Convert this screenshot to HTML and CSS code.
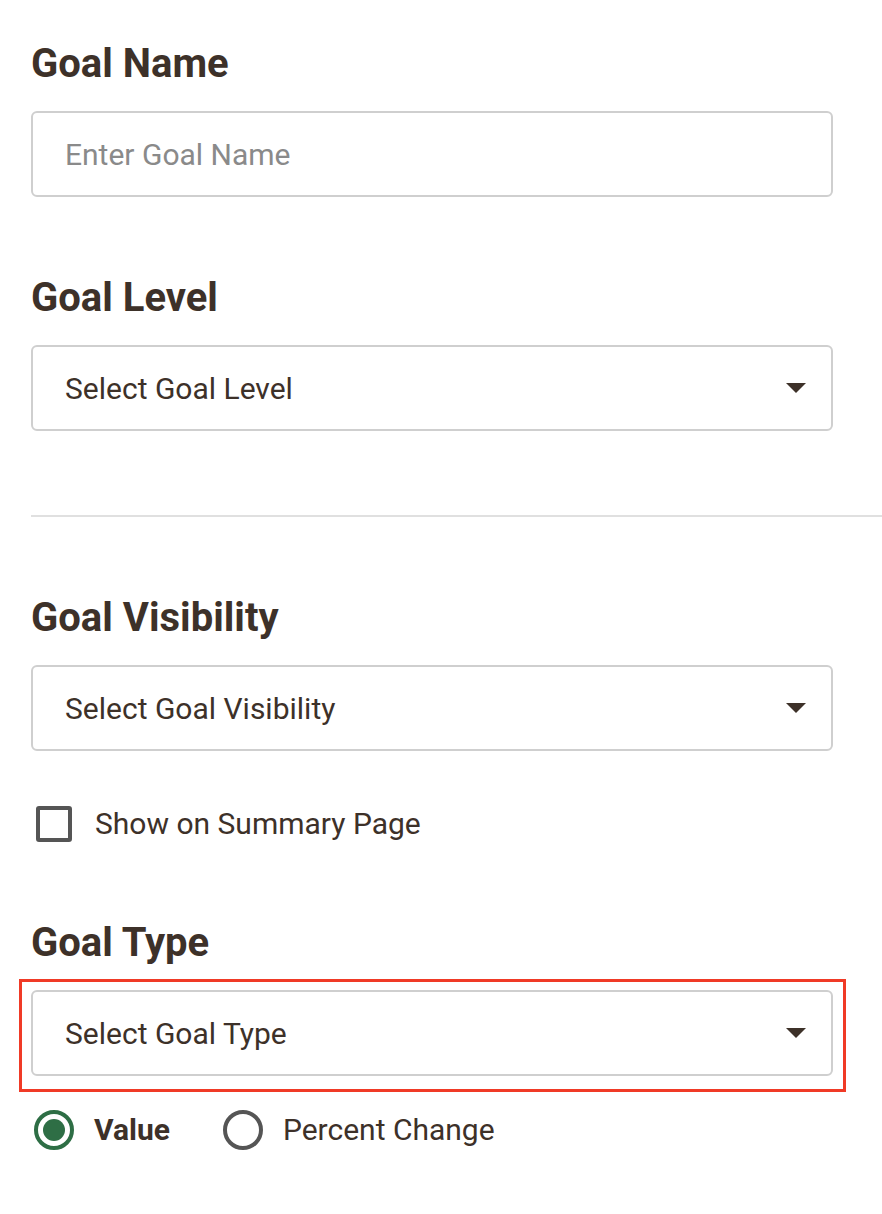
FILE: index.html
```html
<!DOCTYPE html>
<html>
<head>
<meta charset="utf-8">
<link rel="stylesheet" href="styles.css">
</head>
<body>
<div class="page">
  <section class="field first">
    <h2 class="label">Goal Name</h2>
    <div class="box"><span class="placeholder">Enter Goal Name</span></div>
  </section>
  <section class="field">
    <h2 class="label">Goal Level</h2>
    <div class="box select"><span class="value">Select Goal Level</span><span class="caret"></span></div>
  </section>
  <hr class="divider">
  <section class="field">
    <h2 class="label">Goal Visibility</h2>
    <div class="box select"><span class="value">Select Goal Visibility</span><span class="caret"></span></div>
    <label class="check-row"><span class="checkbox"></span><span class="check-text">Show on Summary Page</span></label>
  </section>
  <section class="field">
    <h2 class="label">Goal Type</h2>
    <div class="highlight">
      <div class="box select"><span class="value">Select Goal Type</span><span class="caret"></span></div>
    </div>
    <div class="radios">
      <label class="radio-opt checked"><span class="radio"></span><span class="radio-text">Value</span></label>
      <label class="radio-opt"><span class="radio"></span><span class="radio-text">Percent Change</span></label>
    </div>
  </section>
</div>
</body>
</html>
```

FILE: styles.css
```css
html, body {
  margin: 0;
  padding: 0;
  background: #ffffff;
}
body {
  font-family: Roboto, "Liberation Sans", Arial, sans-serif;
  color: #3d3129;
}
.page {
  padding-top: 40px;
}
.field {
  padding-left: 31px;
  width: 802px;
  margin-top: 77px;
}
.field.first {
  margin-top: 0;
}
.label {
  margin: 0 0 24px 0;
  font-size: 40px;
  line-height: 47px;
  font-weight: 700;
  color: #3d3129;
}
.box {
  box-sizing: border-box;
  height: 86px;
  border: 2px solid #cfcfcf;
  border-radius: 6px;
  display: flex;
  align-items: center;
  padding: 0 25px 0 32px;
  font-size: 30px;
}
.placeholder {
  color: #8a8a8a;
}
.select {
  justify-content: space-between;
}
.value {
  color: #3d3129;
}
.caret {
  width: 0;
  height: 0;
  border-left: 10px solid transparent;
  border-right: 10px solid transparent;
  border-top: 10px solid #3d3129;
}
.divider {
  margin: 84px 0 0 31px;
  border: 0;
  height: 2px;
  background: #e0e0e0;
}
.check-row {
  display: flex;
  align-items: center;
  margin-top: 55px;
  padding-left: 5px;
  gap: 23px;
}
.checkbox {
  box-sizing: border-box;
  width: 36px;
  height: 36px;
  border: 4px solid #555555;
  border-radius: 3px;
}
.check-text {
  font-size: 30px;
  line-height: 36px;
  color: #3d3129;
}
.highlight {
  border: 3px solid #f03a26;
  padding: 8px 10px 13px 9px;
  margin: -11px -13px -16px -12px;
}
.radios {
  display: flex;
  align-items: center;
  margin-top: 34px;
  padding-left: 3px;
  gap: 53px;
}
.radio-opt {
  display: flex;
  align-items: center;
  gap: 20px;
  font-size: 30px;
  line-height: 40px;
}
.radio {
  box-sizing: border-box;
  width: 40px;
  height: 40px;
  border-radius: 50%;
  border: 4px solid #555555;
  position: relative;
}
.radio-opt.checked .radio {
  border-color: #2e6e45;
}
.radio-opt.checked .radio::after {
  content: "";
  position: absolute;
  left: 50%;
  top: 50%;
  width: 22px;
  height: 22px;
  margin: -11px 0 0 -11px;
  border-radius: 50%;
  background: #2e6e45;
}
.radio-opt.checked .radio-text {
  font-weight: 700;
}
```
